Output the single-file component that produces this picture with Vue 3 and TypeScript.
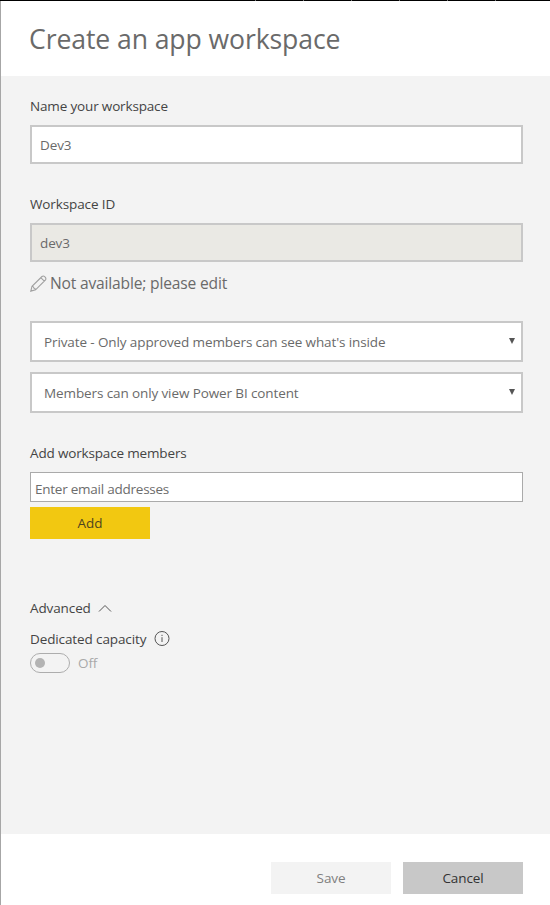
<script setup lang="ts">
import { ref } from 'vue'

const workspaceName = ref('Dev3')
const workspaceId = ref('dev3')
const privacy = ref("Private - Only approved members can see what's inside")
const access = ref('Members can only view Power BI content')
const dividers: number[] = [1, 2, 3, 4, 5, 6]
</script>

<template>
  <div class="page">
    <div class="topline"><i v-for="d in dividers" :key="d"></i></div>
    <div class="panel">
      <header class="header"><h1>Create an app workspace</h1></header>

      <main class="body">
        <label class="label name"><span>Name your workspace</span></label>
        <div class="field"><span>{{ workspaceName }}</span></div>

        <label class="label wid"><span>Workspace ID</span></label>
        <div class="field disabled"><span>{{ workspaceId }}</span></div>

        <div class="notice">
          <svg width="17" height="17" viewBox="0 0 17 17" fill="none" stroke="#a0a0a0" stroke-width="1.1">
            <path d="M.8 16.1 2 11.3 12 1.5Q13.3.3 14.9 1.8T15.5 4.9L5.6 14.8ZM2 11.3Q3.8 11.4 3.8 13 5.4 13.2 5.6 14.8M10.8 2.7 14.3 6.1" />
          </svg>
          <span>Not available; please edit</span>
        </div>

        <div class="select"><span>{{ privacy }}</span><b></b></div>
        <div class="select second"><span>{{ access }}</span><b></b></div>

        <label class="label members"><span>Add workspace members</span></label>
        <div class="email"><span>Enter email addresses</span></div>
        <button class="btn add"><span>Add</span></button>

        <div class="advanced">
          <span>Advanced</span>
          <svg width="14" height="9" viewBox="0 0 14 9" fill="none" stroke="#555" stroke-width="1">
            <path d="M1 7.5 7 1.5 13 7.5" />
          </svg>
        </div>
        <div class="capacity">
          <span>Dedicated capacity</span>
          <svg width="16" height="16" viewBox="0 0 16 16" fill="none" stroke="#555" stroke-width="1">
            <circle cx="8" cy="7.5" r="7" />
            <path d="M8 6.2V11M8 3.8V5" />
          </svg>
        </div>
        <div class="toggle-row">
          <div class="toggle"><i></i></div>
          <span>Off</span>
        </div>
      </main>

      <footer class="footer">
        <button class="btn save"><span>Save</span></button>
        <button class="btn cancel"><span>Cancel</span></button>
      </footer>
    </div>
  </div>
</template>

<style>
body {
  margin: 0;
  background: #fff;
}
</style>

<style scoped>
.page {
  width: 550px;
  height: 905px;
  display: flex;
  flex-direction: column;
  overflow: hidden;
  box-sizing: border-box;
  font-family: 'Segoe UI', 'Open Sans', 'Noto Sans', sans-serif;
  font-size: 13.5px;
  letter-spacing: -0.11px;
  color: #444;
}
.page * {
  box-sizing: border-box;
}
span, h1 {
  white-space: nowrap;
}
.topline {
  height: 1px;
  flex: none;
  background: #000;
  display: flex;
  gap: 47px;
  padding-left: 255px;
}
.topline i {
  width: 1px;
  height: 1px;
  background: #777;
}
.panel {
  flex: 1;
  display: flex;
  flex-direction: column;
  border-left: 1px solid #a6a6a6;
}
.header {
  height: 75px;
  padding: 18px 0 0 28px;
}
h1 {
  margin: 0;
  font-size: 26.6px;
  line-height: 40px;
  letter-spacing: -0.1px;
  font-weight: 400;
  color: #6a6a6a;
}
.body {
  height: 758px;
  background: #f3f3f3;
  padding: 20px 27px 0 29px;
}
.label {
  display: block;
  height: 20px;
  line-height: 20px;
}
.name {
  letter-spacing: -0.16px;
}
.field {
  height: 39px;
  margin-top: 9px;
  border: 2px solid #c8c8c8;
  background: #fff;
  padding-left: 8px;
  line-height: 36px;
  color: #6a6a6a;
}
.disabled {
  background: #eae9e4;
}
.wid {
  margin-top: 30px;
}
.notice {
  display: flex;
  align-items: center;
  gap: 3px;
  height: 22px;
  margin-top: 10px;
  margin-bottom: 27px;
  font-size: 15.6px;
  line-height: 22px;
  letter-spacing: -0.18px;
  color: #6a6a6a;
}
.select {
  height: 41px;
  border: 2px solid #c8c8c8;
  background: #fff;
  padding: 0 6px 0 12px;
  display: flex;
  justify-content: space-between;
  line-height: 38px;
  color: #6a6a6a;
}
.select b {
  border: 3px solid transparent;
  border-top: 6px solid #555;
  border-bottom: 0;
  height: 0;
  margin-top: 15px;
}
.second {
  margin-top: 10px;
}
.members {
  margin-top: 30px;
  letter-spacing: -0.16px;
}
.email {
  height: 30px;
  margin-top: 9px;
  border: 1px solid #aaa;
  background: #fff;
  padding-left: 4px;
  line-height: 33px;
  letter-spacing: -0.24px;
  color: #6c6c6c;
}
.btn {
  display: block;
  width: 120px;
  height: 32px;
  border: 0;
  padding: 0;
  font: inherit;
  line-height: 32px;
  letter-spacing: -0.1px;
  text-align: center;
}
.add {
  margin-top: 5px;
  background: #f2c811;
  color: #4d4520;
  letter-spacing: 0;
}
.advanced {
  display: flex;
  align-items: center;
  gap: 7px;
  height: 20px;
  margin-top: 59px;
}
.capacity {
  display: flex;
  align-items: center;
  gap: 8px;
  height: 20px;
  margin-top: 11px;
}
.toggle-row {
  display: flex;
  align-items: center;
  gap: 8px;
  height: 20px;
  margin-top: 4px;
  color: #a9a9a9;
}
.toggle {
  width: 40px;
  height: 20px;
  border: 1px solid #adadad;
  border-radius: 10px;
  padding: 4px;
}
.toggle i {
  display: block;
  width: 10px;
  height: 10px;
  border-radius: 50%;
  background: #b3b3b3;
}
.footer {
  display: flex;
  justify-content: flex-end;
  gap: 12px;
  padding: 28px 27px 0 0;
}
.save {
  background: #f3f3f3;
  color: #808080;
}
.cancel {
  background: #c8c8c8;
  color: #333;
}
</style>
